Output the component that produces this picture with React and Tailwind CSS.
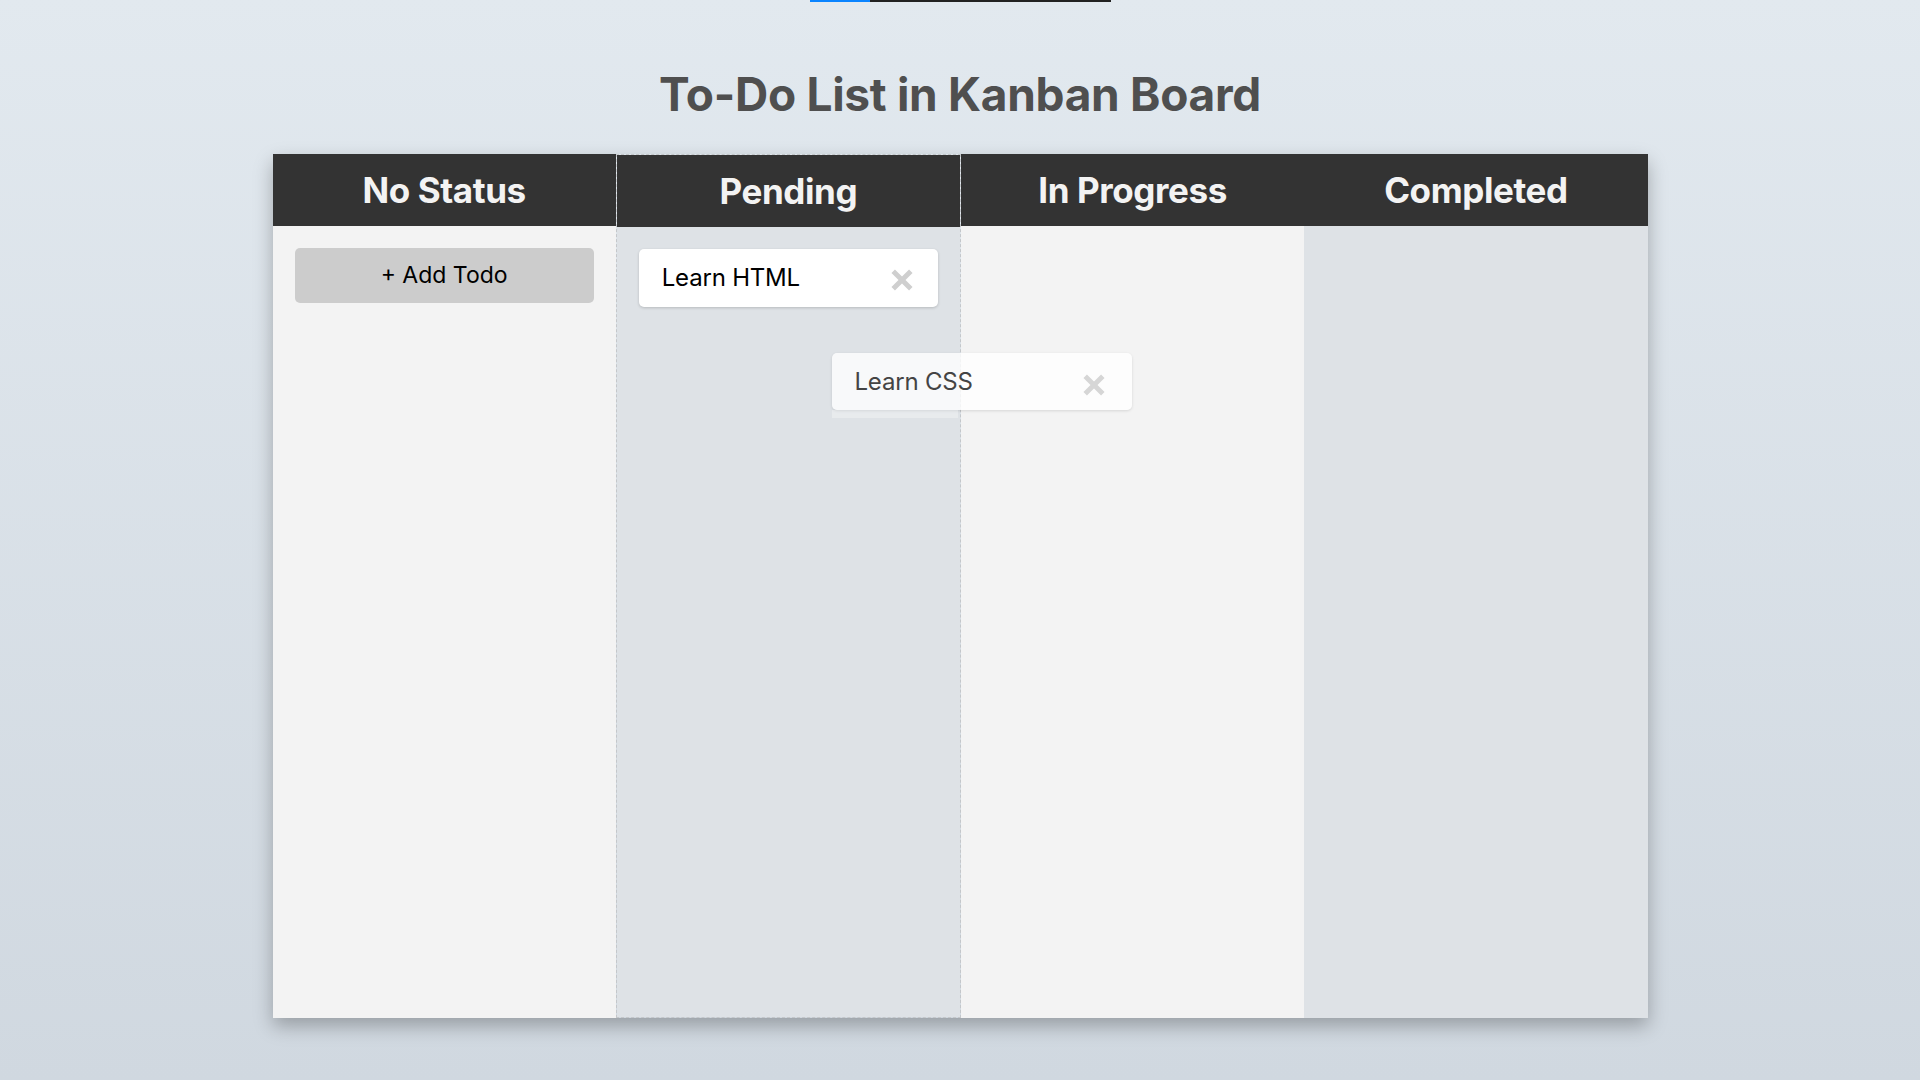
import React from 'react';

const font = { fontFamily: 'Inter, "Noto Sans", sans-serif' };

const XIcon = ({ className = '' }) => (
  <svg viewBox="0 0 20 20" className={className} fill="none">
    <path d="M2 2 L18 18 M18 2 L2 18" stroke="currentColor" strokeWidth="4.5" strokeLinecap="butt" />
  </svg>
);

const columns = [
  { title: 'No Status', body: 'bg-[#f3f3f3]' },
  { title: 'Pending', body: 'bg-[#dee2e6]', dashed: true },
  { title: 'In Progress', body: 'bg-[#f3f3f3]' },
  { title: 'Completed', body: 'bg-[#dee2e6]' },
];

const App = () => {
  return (
    <div
      className="min-h-screen w-full bg-gradient-to-b from-[#e2e9ef] to-[#d0d8e0] flex flex-col items-center"
      style={font}
    >
      {/* top loader line */}
      <div className="w-[301px] h-[2px] flex">
        <div className="w-[60px] bg-[#0a84ff]" />
        <div className="flex-1 bg-[#222]" />
      </div>

      <h1 className="mt-[69px] text-[46px] leading-none font-bold tracking-[-0.3px] text-[#4f4f4f]">
        To-Do List in Kanban Board
      </h1>

      <div className="relative mt-[37px] w-[1375px] h-[864px] flex shadow-[0_8px_18px_rgba(0,0,0,0.28)]">
        {columns.map((col) => (
          <div
            key={col.title}
            className={`flex-1 flex flex-col ${col.dashed ? 'border border-dashed border-[#c4c7ca]' : ''}`}
          >
            <div className="h-[72px] shrink-0 bg-[#333] flex items-center justify-center">
              <span className="text-[35px] font-bold tracking-[-0.4px] text-[#f3f3f3]">{col.title}</span>
            </div>
            <div className={`flex-1 px-[22px] pt-[22px] ${col.body}`}>
              {col.title === 'No Status' && (
                <button className="w-full h-[55px] rounded-[5px] bg-[#cccccc] text-[23px] text-black flex items-center justify-center">
                  + Add Todo
                </button>
              )}
              {col.title === 'Pending' && (
                <div className="w-full h-[58px] rounded-[5px] bg-white shadow-[0_1px_3px_rgba(0,0,0,0.18)] flex items-center justify-between pl-[23px] pr-[25px]">
                  <span className="text-[24px] text-black tracking-[-0.2px]">Learn HTML</span>
                  <XIcon className="w-[22px] h-[22px] text-[#cfcfcf] mt-[4px]" />
                </div>
              )}
            </div>
          </div>
        ))}

        {/* card being dragged */}
        <div className="absolute left-[559px] top-[199px] w-[300px] flex flex-col">
          <div className="h-[57px] rounded-[5px] bg-white/80 shadow-[0_1px_3px_rgba(0,0,0,0.12)] flex items-center justify-between pl-[23px] pr-[27px]">
            <span className="text-[24px] text-[#444] tracking-[-0.2px]">Learn CSS</span>
            <XIcon className="w-[22px] h-[22px] text-[#d6d6d6] mt-[6px]" />
          </div>
          <div className="h-[8px] w-[126px] bg-white/30" />
        </div>
      </div>
    </div>
  );
};

export default App;
